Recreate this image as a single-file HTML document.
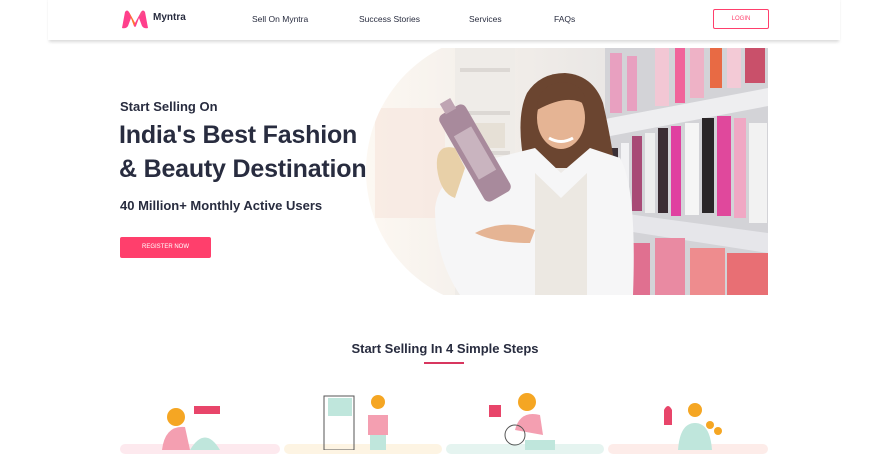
<!DOCTYPE html>
<html><head><meta charset="utf-8"><style>
*{margin:0;padding:0;box-sizing:border-box}
body{width:890px;height:450px;overflow:hidden;background:#fff;font-family:"Liberation Sans",sans-serif;color:#282c3f;position:relative}
.hdr{position:absolute;left:48px;top:-5px;width:792px;height:45px;background:#fff;box-shadow:0 3px 3px -1px rgba(0,0,0,.15)}
.nav{position:absolute;top:14px;font-size:8.5px;color:#282c3f}
.login{position:absolute;left:713px;top:9px;width:56px;height:20px;border:1px solid #ff3f6c;border-radius:2px;color:#ff3f6c;font-size:6px;text-align:center;line-height:18px}
.t1{position:absolute;left:120px;top:99px;font-size:13px;font-weight:bold;color:#282c3f}
.t2{position:absolute;left:119px;top:118px;font-size:25px;font-weight:bold;line-height:34px;color:#282c3f;letter-spacing:-0.2px}
.t3{position:absolute;left:120px;top:198px;font-size:13px;font-weight:bold}
.btn{position:absolute;left:120px;top:237px;width:91px;height:21px;background:#ff3f6c;border-radius:2px;color:#fff;font-size:6px;text-align:center;line-height:21px}
.h2{position:absolute;left:0;width:890px;top:341px;text-align:center;font-size:13px;font-weight:bold}
.ul{position:absolute;left:424px;top:362px;width:40px;height:2px;background:#d8365f}
.card{position:absolute;top:444px;height:10px;border-radius:5px}
</style></head><body>
<div class="hdr"></div>
<svg style="position:absolute;left:120px;top:9px" width="30" height="20" viewBox="0 0 30 20">
<path d="M2 19 L5 3 Q7 0 9 3 L15 14 L21 3 Q23 0 25 3 L28 19 Q24 20 22 17 L19 9 L16 17 Q15 19 14 17 L11 9 L8 17 Q6 20 2 19Z" fill="#ff3f8c"/>
<path d="M9 3 L15 14 L14 17 L11 9Z" fill="#ff7a2a"/><path d="M21 3 L25 3 L19 9Z" fill="#f74e8a"/>
</svg>
<div style="position:absolute;left:153px;top:12px;font-size:10px;font-weight:bold">Myntra</div>
<div class="nav" style="left:252px">Sell On Myntra</div>
<div class="nav" style="left:359px">Success Stories</div>
<div class="nav" style="left:469px">Services</div>
<div class="nav" style="left:554px">FAQs</div>
<div class="login">LOGIN</div>

<div class="t1">Start Selling On</div>
<div class="t2">India's Best Fashion<br>&amp; Beauty Destination</div>
<div class="t3">40 Million+ Monthly Active Users</div>
<div class="btn">REGISTER NOW</div>

<svg style="position:absolute;left:365px;top:48px" width="403" height="247" viewBox="0 0 403 247">
<defs><clipPath id="c"><circle cx="139" cy="123" r="138"/><rect x="139" y="0" width="264" height="247"/></clipPath>
<linearGradient id="bg" x1="0" x2="1"><stop offset="0" stop-color="#fdf8f2"/><stop offset=".4" stop-color="#f0ece8"/><stop offset="1" stop-color="#dcdcdf"/></linearGradient></defs>
<g clip-path="url(#c)">
<rect width="403" height="247" fill="url(#bg)"/>
<rect x="10" y="60" width="70" height="110" fill="#f6e4dc" opacity=".6"/>
<rect x="90" y="0" width="60" height="247" fill="#efece8"/>
<rect x="95" y="20" width="50" height="4" fill="#dcd8d4"/><rect x="95" y="63" width="50" height="4" fill="#dcd8d4"/><rect x="95" y="103" width="50" height="4" fill="#dcd8d4"/>
<rect x="100" y="75" width="40" height="25" fill="#e6e0d6"/>
<rect x="240" y="0" width="163" height="247" fill="#d3d3d7"/>
<g fill="#e8a0c0"><rect x="245" y="5" width="12" height="60"/><rect x="262" y="8" width="10" height="55"/><rect x="290" y="0" width="14" height="58" fill="#f2c7d4"/><rect x="310" y="0" width="10" height="55" fill="#f0649a"/><rect x="325" y="0" width="14" height="50" fill="#eeb2c6"/><rect x="345" y="0" width="12" height="40" fill="#e86a44"/><rect x="362" y="0" width="14" height="40" fill="#f3cad6"/><rect x="380" y="0" width="20" height="35" fill="#c9506a"/></g>
<polygon points="235,72 403,40 403,58 235,90" fill="#eeeef0"/>
<g><rect x="245" y="100" width="8" height="60" fill="#3a3036"/><rect x="256" y="95" width="8" height="65" fill="#f2f2f4"/><rect x="267" y="88" width="10" height="75" fill="#a84a76"/><rect x="280" y="85" width="10" height="80" fill="#eee"/><rect x="293" y="80" width="10" height="85" fill="#3b2c33"/><rect x="306" y="78" width="10" height="90" fill="#e040a0"/><rect x="320" y="75" width="14" height="92" fill="#f5f5f5"/><rect x="337" y="70" width="12" height="95" fill="#2a2628"/><rect x="352" y="68" width="14" height="100" fill="#e0489c"/><rect x="369" y="70" width="12" height="100" fill="#f0a8c4"/><rect x="384" y="75" width="18" height="100" fill="#f2f2f2"/></g>
<polygon points="255,165 403,185 403,205 255,182" fill="#e6e6ea"/>
<g fill="#e07090"><rect x="255" y="195" width="30" height="52"/><rect x="290" y="190" width="30" height="57" fill="#e98aa2"/><rect x="325" y="200" width="35" height="47" fill="#ee8c8e"/><rect x="362" y="205" width="41" height="42" fill="#e86f74"/></g>
<path d="M160 120 Q150 70 162 45 Q175 25 200 25 Q228 27 238 55 Q245 85 250 120 Z" fill="#6b4530"/>
<ellipse cx="196" cy="70" rx="24" ry="31" fill="#e5b494"/>
<path d="M172 62 Q172 36 198 34 Q220 36 222 58 Q205 44 172 62Z" fill="#6b4530"/>
<path d="M184 90 Q196 97 208 90" stroke="#fff" stroke-width="3" fill="none"/>
<path d="M70 160 Q75 120 130 110 L170 100 L196 125 L225 100 L255 110 Q272 140 268 247 L95 247 Q70 210 70 160Z" fill="#f6f6f7"/>
<path d="M170 125 L196 150 L222 125 L222 247 L170 247Z" fill="#ece8e2"/>
<g transform="rotate(-30 110 105)"><rect x="95" y="55" width="30" height="100" rx="6" fill="#a88a9c"/><rect x="104" y="45" width="12" height="12" fill="#bfa5b3"/><rect x="100" y="80" width="20" height="50" fill="#c9b4bf"/></g>
<path d="M90 100 Q70 95 72 120 Q75 145 90 150 L100 120Z" fill="#e8d0a8"/>
<path d="M110 185 Q140 170 170 182 L165 195 Q130 195 110 185Z" fill="#e5b494"/>
</g></svg>

<div class="h2">Start Selling In 4 Simple Steps</div>
<div class="ul"></div>
<div class="card" style="left:120px;width:160px;background:#fde9ee"></div>
<div class="card" style="left:284px;width:158px;background:#fdf4e3"></div>
<div class="card" style="left:446px;width:158px;background:#e5f4f0"></div>
<div class="card" style="left:608px;width:160px;background:#fdece9"></div>
<svg style="position:absolute;left:150px;top:395px" width="80" height="55"><circle cx="26" cy="22" r="9" fill="#f5a623"/><path d="M12 55 Q15 30 35 32 L40 55Z" fill="#f49fb1"/><rect x="44" y="11" width="26" height="8" fill="#e8456a"/><path d="M40 55 Q55 30 70 55Z" fill="#bfe6dc"/></svg>
<svg style="position:absolute;left:320px;top:390px" width="80" height="60"><rect x="4" y="6" width="30" height="54" fill="none" stroke="#555"/><path d="M8 8 h24 v18 h-24z" fill="#bfe6dc"/><circle cx="58" cy="12" r="7" fill="#f5a623"/><path d="M48 25 h20 v20 h-20z" fill="#f49fb1"/><path d="M50 45 h16 v15 h-16z" fill="#bfe6dc"/></svg>
<svg style="position:absolute;left:485px;top:390px" width="80" height="60"><rect x="4" y="15" width="12" height="12" fill="#e8456a"/><circle cx="42" cy="12" r="9" fill="#f5a623"/><path d="M30 40 Q35 20 55 25 L58 45Z" fill="#f49fb1"/><circle cx="30" cy="45" r="10" fill="none" stroke="#555"/><path d="M40 50 h30 v10 h-30z" fill="#bfe6dc"/></svg>
<svg style="position:absolute;left:650px;top:395px" width="80" height="55"><path d="M14 15 q4-8 8 0 v15 h-8z" fill="#e8456a"/><circle cx="45" cy="15" r="7" fill="#f5a623"/><path d="M28 55 Q30 28 45 28 Q60 28 62 55Z" fill="#bfe6dc"/><circle cx="60" cy="30" r="4" fill="#f5a623"/><circle cx="68" cy="36" r="4" fill="#f5a623"/></svg>
</body></html>
